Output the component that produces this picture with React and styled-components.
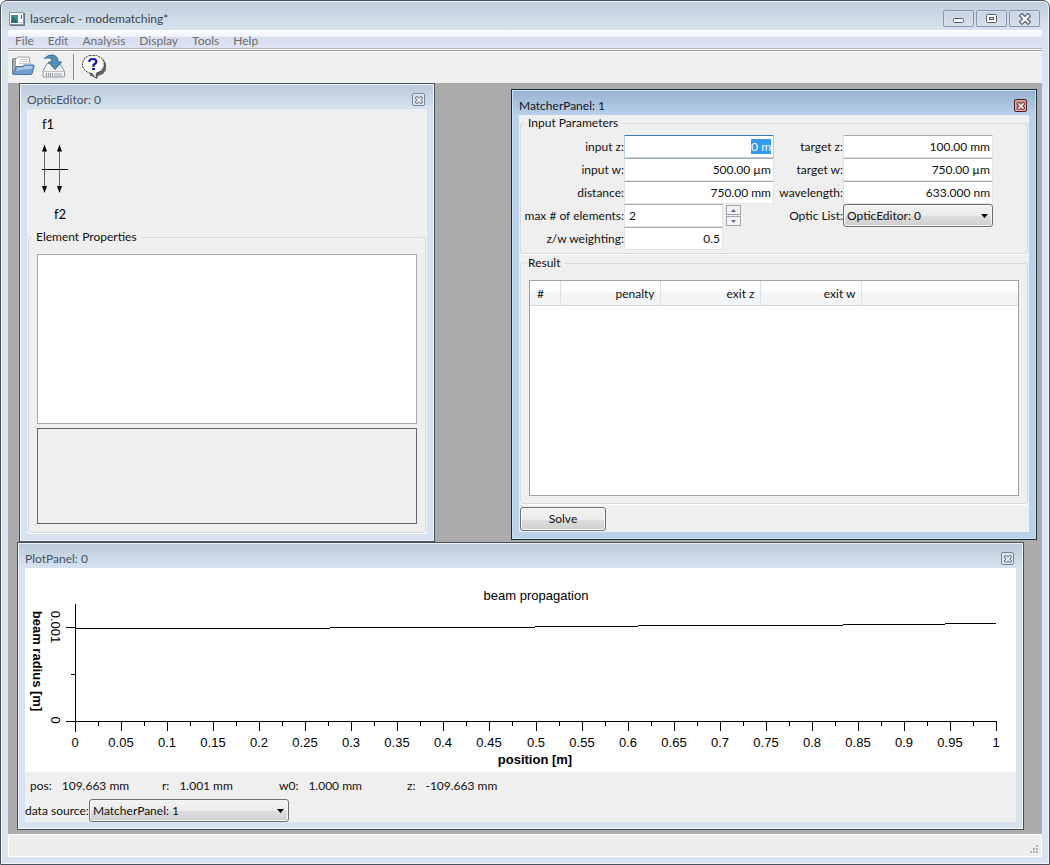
import { useEffect, useRef } from 'react';
import styled, { createGlobalStyle } from 'styled-components';

const xTicks = Array.from({ length: 21 }, (_, i) => i);

const results = [
	{ name: '#', width: 30, align: 'left' },
	{ name: 'penalty', width: 100 },
	{ name: 'exit z', width: 100 },
	{ name: 'exit w', width: 101 },
	{ name: '', width: null },
];

const readings = [
	{ name: 'pos:', value: '109.663 mm', width: 132 },
	{ name: 'r:', value: '1.001 mm', width: 117 },
	{ name: 'w0:', value: '1.000 mm', width: 128 },
	{ name: 'z:', value: '-109.663 mm', width: 128 },
];

const AppIcon = () => (
	<svg width="16" height="14" viewBox="0 0 16 14">
		<rect x="0.5" y="0.5" width="14" height="12" fill="#fbfcfc" stroke="#8d979d" />
		<path d="M1 13.5h14.5V1" fill="none" stroke="#66717a" />
		<rect x="2" y="3" width="7" height="8" fill="#3f8f86" />
		<path d="M2 11V7l3-2 4 6z" fill="#2c6d7c" />
		<path d="M12.5 3v4" stroke="#3a6672" />
		<path d="M10 10.500h4" stroke="#b9c4c9" />
	</svg>
);

const OpenIcon = () => (
	<svg width="24" height="24" viewBox="0 0 24 24">
		<path d="M1.500 19V4.500q0-1 1-1H6l1 2v3L4 19z" fill="#a6aaad" stroke="#7b8084" />
		<path d="M4.500 14V4.500L7 2h11l1.500 9z" fill="#fff" stroke="#9ba0a4" />
		<path d="M8 4.500h9M8 6.500h10M8 8.500h10" stroke="#c5cacd" />
		<path d="M5.500 11.500h6l1.500-1.500h9.500q.8 0 .6 1l-2 7.500q-.3 1-1.300 1H3.200q-1 0-.8-1z" fill="#6f9fd0" stroke="#4674a8" />
		<path d="M6.500 12.500h6l1.500-1.500h7.500l-.8 3q-8 0-15.500 2z" fill="#a9caea" />
	</svg>
);

const SaveIcon = () => (
	<svg width="24" height="25" viewBox="0 0 24 25">
		<path d="M5 9.500h13l4.500 8v4.500q0 1-1 1H2q-1 0-1-1v-4.500z" fill="#f1f2f2" stroke="#8e9498" />
		<path d="M1.500 17.500h20.500" stroke="#c0c5c8" />
		<path d="M4.500 19v3M6.500 19v3M8.500 19v3M10.500 19v3" stroke="#8f9598" />
		<path d="M12 20.500h8" stroke="#c7cccf" strokeWidth="3" />
		<path d="M2.500 4.500Q6 .5 10.500 1q5.500.7 5.500 7h3.500L13 15.500 6.500 8H10Q10 4.500 7.500 4 5 3.500 2.500 4.500z" fill="#4f8fb9" stroke="#34698f" />
	</svg>
);

const HelpIcon = () => (
	<svg width="26" height="26" viewBox="0 0 26 26">
		<path d="M9 3h9l5 3 2 4v6l-3 4-5 2-1 3-5-3H9z" fill="#666" />
		<path d="M8.500 1.500h7l5 2.500 2.500 4v5l-3 4-4.500 2-.5 5-4.500-5H8l-4-2.500-2.500-4v-4l2.500-4.500z" fill="#fff" stroke="#333" strokeDasharray="2 1" />
		<path d="M8.500 8V6.500Q9 5 12 5T15.500 7.500q0 1.500-3 3.500v2" fill="none" stroke="#1414b8" strokeWidth="2.200" />
		<rect x="11" y="14" width="3" height="2" fill="#1414b8" />
	</svg>
);

const CloseIcon = ({ size, line }) => (
	<svg width={size} height={size} viewBox="0 0 12 12">
		<path d="M3 3l6 6M9 3l-6 6" stroke={line} strokeWidth="4.600" strokeLinecap="square" />
		<path d="M3 3l6 6M9 3l-6 6" stroke="#fff" strokeWidth="2.400" strokeLinecap="square" />
	</svg>
);

const MinimizeIcon = () => (
	<svg width="12" height="12" viewBox="0 0 12 12">
		<rect x="0.500" y="5.500" width="10" height="4" rx="1" fill="#fff" stroke="#535a6b" />
	</svg>
);

const MaximizeIcon = () => (
	<svg width="12" height="10" viewBox="0 0 12 10">
		<rect x="0.500" y="0.500" width="10" height="8" rx="1" fill="#fff" stroke="#535a6b" />
		<rect x="3.500" y="3.500" width="4" height="2" fill="#cfdae7" stroke="#535a6b" />
	</svg>
);

const Grip = () => (
	<svg width="9" height="9" viewBox="0 0 9 9" fill="#b4b0b0">
		{[[6, 0], [6, 3], [3, 3], [6, 6], [3, 6], [0, 6]].map(([x, y]) => (
			<rect key={`${x}-${y}`} x={x} y={y} width="2" height="2" />
		))}
	</svg>
);

const DropDown = ({ id, value, width }) => (
	<SelectBox $width={width}>
		<select id={id} defaultValue={value}>
			<option>{value}</option>
		</select>
		<svg width="7" height="4" viewBox="0 0 7 4">
			<path d="M0 0h7L3.500 4z" />
		</svg>
	</SelectBox>
);

const SubWindow = ({ title, active, children, ...place }) => (
	<WindowFrame $active={active} {...place}>
		<WindowTitle $active={active}>
			<h2>{title}</h2>
			<WindowClose $active={active} aria-label={`Close ${title}`}>
				<CloseIcon size={8} line={active ? '#5a2b2e' : '#535a6b'} />
			</WindowClose>
		</WindowTitle>
		<WindowBody>{children}</WindowBody>
	</WindowFrame>
);

const OpticEditor = () => (
	<SubWindow title="OpticEditor: 0" $left={11} $top={0} $width={416} $height={459}>
		<OpticView viewBox="0 0 120 120" width="120" height="120">
			<text x="15" y="20">f1</text>
			<text x="27" y="110">f2</text>
			<path d="M17.500 38v44M32.500 38v44" stroke="#666" />
			<path d="M15 60.500h26" stroke="#000" />
			<path d="M17.500 35.500l2.500 7h-5zM32.500 35.500l2.500 7h-5zM17.500 84l2.500-7h-5zM32.500 84l2.500-7h-5z" />
		</OpticView>
		<Group $grow $pad="9px 3px 8px">
			<legend>Element Properties</legend>
			<ElementList />
			<ElementDetail />
		</Group>
	</SubWindow>
);

const MatcherPanel = () => {
	const first = useRef(null);

	useEffect(() => {
		first.current.focus();
		first.current.select();
	}, []);

	return (
		<SubWindow title="MatcherPanel: 1" active $left={503} $top={6} $width={526} $height={451}>
			<Group $pad="4px 3px 3px">
				<legend>Input Parameters</legend>
				<Form>
					<label htmlFor="input-z">input z:</label>
					<Field id="input-z" ref={first} defaultValue="0 m" />
					<label htmlFor="target-z">target z:</label>
					<Field id="target-z" defaultValue="100.00 mm" />

					<label htmlFor="input-w">input w:</label>
					<Field id="input-w" defaultValue="500.00 µm" />
					<label htmlFor="target-w">target w:</label>
					<Field id="target-w" defaultValue="750.00 µm" />

					<label htmlFor="distance">distance:</label>
					<Field id="distance" defaultValue="750.00 mm" />
					<label htmlFor="wavelength">wavelength:</label>
					<Field id="wavelength" defaultValue="633.000 nm" />

					<label htmlFor="max-elements">max # of elements:</label>
					<SpinBox>
						<Field id="max-elements" $short $align="left" defaultValue="2" />
						<SpinButtons>
							<button aria-label="More elements">
								<svg width="5" height="3" viewBox="0 0 5 3"><path d="M0 3h5L2.500 0z" /></svg>
							</button>
							<button aria-label="Fewer elements">
								<svg width="5" height="3" viewBox="0 0 5 3"><path d="M0 0h5L2.500 3z" /></svg>
							</button>
						</SpinButtons>
					</SpinBox>
					<label htmlFor="optic-list">Optic List:</label>
					<DropDown id="optic-list" value="OpticEditor: 0" width={150} />

					<label htmlFor="weighting">z/w weighting:</label>
					<Field id="weighting" $short defaultValue="0.5" />
				</Form>
			</Group>
			<Group $grow $pad="9px 3px 7px">
				<legend>Result</legend>
				<ResultBox>
					<ResultTable>
						<thead>
							<tr>
								{results.map(({ name, width, align }) => (
									<HeadCell key={name} $width={width} $align={align}>{name}</HeadCell>
								))}
							</tr>
						</thead>
					</ResultTable>
				</ResultBox>
			</Group>
			<SolveButton>Solve</SolveButton>
		</SubWindow>
	);
};

const PlotPanel = () => (
	<SubWindow title="PlotPanel: 0" $left={9} $right={18} $top={459} $height={288}>
		<Plot viewBox="0 0 991 204">
			<text x="511" y="32">beam propagation</text>
			<g stroke="#000" shapeRendering="crispEdges" fill="none">
				<path d="M50.500 36v128M41 153.500h930M41 59.500h9M46 106.500h4" />
				<path d="M50 60.500h255M305 59.500h205M510 58.500h103M613 57.500h205M818 56.500h102M920 55.500h51" />
				{xTicks.map((i) => (
					<path key={i} d={`M${50.5 + Math.round(i * 46.05)} 153v10`} />
				))}
				{xTicks.slice(0, -1).map((i) => (
					<path key={i} d={`M${50.5 + Math.round((i + 0.5) * 46.05)} 153v5`} />
				))}
			</g>
			{xTicks.map((i) => (
				<text key={i} x={50 + Math.round(i * 46.05)} y="179">{Number((i * 0.05).toFixed(2))}</text>
			))}
			<text x="510" y="196" fontWeight="bold">position [m]</text>
			<text transform="translate(26 59) rotate(90)">0.001</text>
			<text transform="translate(26 152) rotate(90)">0</text>
			<text transform="translate(8 93) rotate(90)" fontWeight="bold">beam radius [m]</text>
		</Plot>
		<Readings>
			{readings.map(({ name, value, width }) => (
				<Reading key={name} $width={width}>
					<span>{name}</span>
					<output>{value}</output>
				</Reading>
			))}
		</Readings>
		<SourceRow>
			<label htmlFor="data-source">data source:</label>
			<DropDown id="data-source" value="MatcherPanel: 1" width={200} />
		</SourceRow>
	</SubWindow>
);

const App = () => {
	return (
		<>
			<GlobalStyle />
			<Frame>
				<TitleBar>
					<AppIcon />
					<h1>lasercalc - modematching*</h1>
					<FrameButtons>
						<button aria-label="Minimize"><MinimizeIcon /></button>
						<button aria-label="Maximize"><MaximizeIcon /></button>
						<button aria-label="Close"><CloseIcon size={12} line="#535a6b" /></button>
					</FrameButtons>
				</TitleBar>
				<MenuBar>
					{['File', 'Edit', 'Analysis', 'Display', 'Tools', 'Help'].map((name) => (
						<button key={name}>{name}</button>
					))}
				</MenuBar>
				<ToolBar>
					<button aria-label="Open"><OpenIcon /></button>
					<button aria-label="Save"><SaveIcon /></button>
					<Separator />
					<button aria-label="Help"><HelpIcon /></button>
				</ToolBar>
				<Desktop>
					<OpticEditor />
					<MatcherPanel />
					<PlotPanel />
				</Desktop>
				<StatusBar>
					<Grip />
				</StatusBar>
			</Frame>
		</>
	);
};

export default App;

const GlobalStyle = createGlobalStyle`
	* {
		box-sizing: border-box;
	}

	body {
		margin: 0;
		background: #ffffff;
	}

	body, button, input, select {
		font-family: Lato, "Open Sans", sans-serif;
		font-size: 12px;
		line-height: 16px;
		color: #111111;
	}

	h1, h2 {
		margin: 0;
		font-size: 12px;
		font-weight: normal;
	}

	svg {
		display: block;
		flex: none;
	}
`;

const Frame = styled.div`
	display: flex;
	flex-direction: column;
	min-height: 100vh;
	padding: 0 7px 7px;
	border: 1px solid #47525e;
	border-radius: 7px 7px 0 0;
	background: linear-gradient(#bfcddb, #d8e4ef 30px, #d8e4f0);
	box-shadow: inset 0 0 0 1px #f0f5fa;
`;

const TitleBar = styled.header`
	display: flex;
	align-items: center;
	gap: 5px;
	height: 29px;
	padding: 6px 2px 0 1px;

	h1 {
		flex: 1;
		color: #3c444c;
	}
`;

const FrameButtons = styled.div`
	display: flex;
	gap: 2px;

	button {
		display: flex;
		align-items: center;
		justify-content: center;
		width: 31px;
		height: 17px;
		padding: 0;
		border: 1px solid #8794ab;
		border-radius: 2px;
		background: transparent;
		box-shadow: inset 0 0 0 1px #d5e0eb;
	}
`;

const MenuBar = styled.nav`
	display: flex;
	gap: 14px;
	height: 21px;
	padding: 1px 7px 0;
	border-bottom: 1px solid #96999f;
	background: linear-gradient(#ffffff, #eef1f8 7px, #d8def0 7px, #dee3f4 18px, #b4b8c0 18px, #b4b8c0 19px, #f8f8f8 19px);

	button {
		padding: 0;
		border: 0;
		background: none;
		color: #6d6d6d;
	}
`;

const ToolBar = styled.div`
	display: flex;
	align-items: center;
	gap: 7px;
	height: 32px;
	padding: 0 3px 2px;
	border-top: 1px solid #ffffff;
	background: #efefef;

	button {
		padding: 0;
		border: 0;
		background: none;
	}
`;

const Separator = styled.div`
	width: 1px;
	height: 26px;
	background: #8c8c8c;
`;

const Desktop = styled.main`
	position: relative;
	flex: 1;
	min-height: 751px;
	background: #ababab;
`;

const WindowFrame = styled.section`
	position: absolute;
	display: flex;
	flex-direction: column;
	left: ${({ $left }) => $left}px;
	top: ${({ $top }) => $top}px;
	right: ${({ $right }) => ($right ? `${$right}px` : 'auto')};
	width: ${({ $width }) => ($width ? `${$width}px` : 'auto')};
	height: ${({ $height }) => $height}px;
	padding: 0 7px 7px;
	border: 1px solid ${({ $active }) => ($active ? '#1f2f3a' : '#4a525b')};
	background: ${({ $active }) =>
		$active ? 'linear-gradient(#97b2d1, #b9d1ea 26px)' : 'linear-gradient(#bccad9, #d7e3f0 26px)'};
	box-shadow: inset 0 0 0 1px ${({ $active }) => ($active ? '#c4e4f6' : '#eaf1f8')};
`;

const WindowTitle = styled.header`
	display: flex;
	align-items: center;
	justify-content: space-between;
	height: 25px;
	padding: 6px 2px 0 0;

	h2 {
		color: ${({ $active }) => ($active ? '#10161d' : '#47525e')};
	}
`;

const WindowClose = styled.button`
	display: flex;
	align-items: center;
	justify-content: center;
	width: 13px;
	height: 13px;
	padding: 0;
	border: 1px solid ${({ $active }) => ($active ? '#4d1c22' : '#76829b')};
	border-radius: 2px;
	background: ${({ $active }) => ($active ? '#c87e7b' : '#d3deea')};
	box-shadow: inset 0 0 0 1px ${({ $active }) => ($active ? '#e3aeaa' : '#e3ebf3')};
`;

const WindowBody = styled.div`
	display: flex;
	flex: 1;
	flex-direction: column;
	min-height: 0;
	background: #efefef;
`;

const Group = styled.fieldset`
	display: flex;
	flex: ${({ $grow }) => ($grow ? 1 : 'none')};
	flex-direction: column;
	gap: 4px;
	min-width: 0;
	margin: 0 1px 1px;
	padding: ${({ $pad }) => $pad};
	border: 1px solid #d5dadf;
	border-radius: 3px;
	box-shadow: 0 1px 0 #ffffff;

	legend {
		padding: 0 4px;
	}
`;

const OpticView = styled.svg`
	font-size: 13px;
`;

const ElementList = styled.div`
	height: 170px;
	margin: 0 5px;
	border: 1px solid #a9a9a9;
	background: #ffffff;
`;

const ElementDetail = styled.div`
	flex: 1;
	margin: 0 5px;
	border: 1px solid #666666;
`;

const Form = styled.div`
	display: grid;
	grid-template-columns: 100px 150px 69px 150px;
	grid-auto-rows: 23px;
	align-items: center;

	label {
		text-align: right;
		white-space: nowrap;
		justify-self: end;
	}
`;

const Field = styled.input`
	width: ${({ $short }) => ($short ? '99px' : '150px')};
	height: 23px;
	padding: 0 2px 0 4px;
	border: 1px solid #e1e5ea;
	border-top-color: #a9abb1;
	border-radius: 1px;
	outline: none;
	background: #ffffff;
	text-align: ${({ $align }) => $align || 'right'};

	&:focus {
		border-color: #b5cfe7;
		border-top-color: #3d7bad;
	}

	&::selection {
		background: #3399ff;
		color: #ffffff;
	}
`;

const SpinBox = styled.div`
	display: flex;
	align-items: center;
	gap: 3px;
`;

const SpinButtons = styled.div`
	display: flex;
	flex-direction: column;
	gap: 1px;

	button {
		display: flex;
		align-items: center;
		justify-content: center;
		width: 15px;
		height: 10px;
		padding: 0;
		border: 1px solid #a3a3a8;
		background: #f3f3f3;
	}

	path {
		fill: #5b6a9a;
	}
`;

const SelectBox = styled.div`
	position: relative;
	width: ${({ $width }) => $width}px;

	select {
		display: block;
		appearance: none;
		width: 100%;
		height: 23px;
		padding: 0 20px 0 3px;
		border: 1px solid #707070;
		border-radius: 3px;
		background: linear-gradient(#f2f2f2, #ebebeb 11px, #dddddd 11px, #cfcfcf);
		box-shadow: inset 0 0 0 1px #f6f6f6;
	}

	svg {
		position: absolute;
		right: 5px;
		top: 10px;
		pointer-events: none;
	}
`;

const ResultBox = styled.div`
	flex: 1;
	margin: 0 5px;
	border: 1px solid #a0a4aa;
	background: #ffffff;
`;

const ResultTable = styled.table`
	width: 100%;
	table-layout: fixed;
	border-collapse: collapse;
`;

const HeadCell = styled.th`
	width: ${({ $width }) => ($width ? `${$width}px` : 'auto')};
	height: 24px;
	padding: 2px 5px 0 7px;
	border-right: ${({ $width }) => ($width ? '1px solid #dfe1e4' : '0')};
	border-bottom: 1px solid #d5d5d5;
	background: linear-gradient(#ffffff, #ffffff 10px, #f5f6f8 11px, #f1f2f4);
	font-weight: normal;
	text-align: ${({ $align }) => $align || 'right'};
`;

const SolveButton = styled.button`
	width: 86px;
	height: 24px;
	margin: 2px 1px 1px;
	padding: 0;
	border: 1px solid #707070;
	border-radius: 3px;
	background: linear-gradient(#f2f2f2, #ebebeb 12px, #dddddd 12px, #cfcfcf);
	box-shadow: inset 0 0 0 1px #f8f8f8;
`;

const Plot = styled.svg`
	width: 100%;
	background: #ffffff;
	font-family: "Liberation Sans", Arial, sans-serif;
	font-size: 13px;
	text-anchor: middle;
`;

const Readings = styled.div`
	display: flex;
	flex: 1;
	align-items: center;
	padding: 0 5px;
`;

const Reading = styled.div`
	display: flex;
	gap: 10px;
	width: ${({ $width }) => $width}px;
`;

const SourceRow = styled.div`
	display: flex;
	align-items: center;

	label {
		width: 64px;
		white-space: nowrap;
	}
`;

const StatusBar = styled.footer`
	display: flex;
	align-items: flex-end;
	justify-content: flex-end;
	height: 23px;
	padding: 2px;
	border: 1px solid #ffffff;
	background: #f0eded;
`;
